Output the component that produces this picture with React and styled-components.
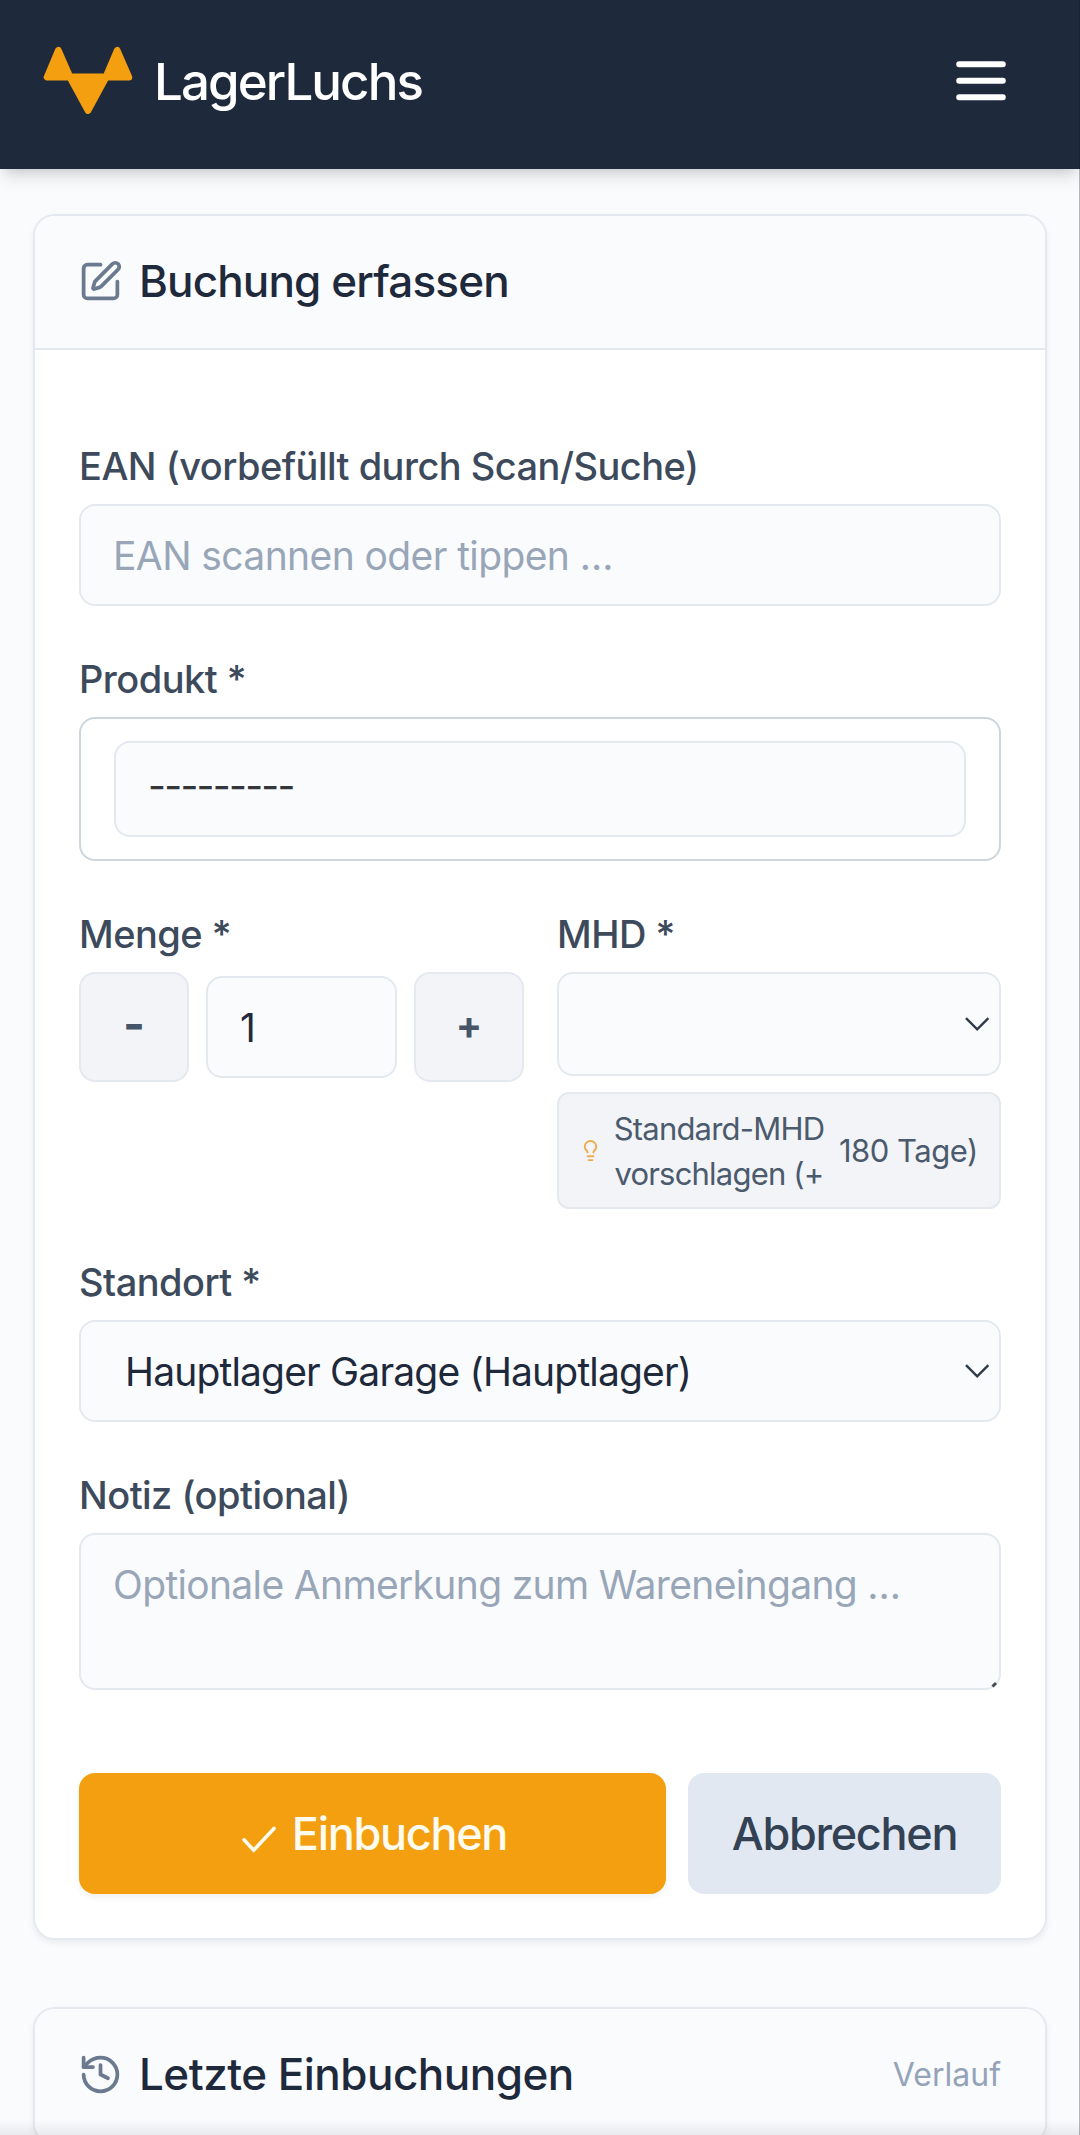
import styled, { createGlobalStyle } from 'styled-components'
import { History, Lightbulb, SquarePen } from 'lucide-react'

const GlobalStyle = createGlobalStyle`
  * {
    box-sizing: border-box;
  }

  body {
    margin: 0;
    background: #fafbfd;
    font-family: Inter, 'Liberation Sans', sans-serif;
    color: #1e293b;
  }

  input, textarea, button {
    font: inherit;
    margin: 0;
  }
`

const Page = styled.div`
  position: relative;
  height: 2135px;
  overflow: hidden;
`

const EdgeLine = styled.div`
  position: absolute;
  top: 0;
  right: 0;
  bottom: 0;
  width: 1px;
  background: rgba(20, 24, 32, 0.3);
`

const BottomFade = styled.div`
  position: absolute;
  left: 0;
  right: 0;
  bottom: 0;
  height: 15px;
  background: linear-gradient(rgba(30, 35, 50, 0), rgba(30, 35, 50, 0.08));
`

const Header = styled.header`
  display: flex;
  align-items: center;
  justify-content: space-between;
  height: 169px;
  padding: 0 74px 7px 43px;
  background: #1e2a3c;
  box-shadow: 0 11px 16px -3px rgba(0, 0, 0, 0.12), 0 6px 11px -6px rgba(0, 0, 0, 0.12);
`

const Brand = styled.div`
  display: flex;
  align-items: center;
  gap: 20px;
`

const BrandName = styled.span`
  font-size: 51px;
  font-weight: 500;
  line-height: 60px;
  letter-spacing: -1.9px;
  margin: 1px 0 0 1px;
  color: #fff;
`

const Main = styled.main`
  display: flex;
  flex-direction: column;
  gap: 67px;
  padding: 45px 33px 0;
`

const Card = styled.section`
  border: 2px solid #e4e9f0;
  border-radius: 22px;
  background: #fff;
  overflow: hidden;
  box-shadow: 0 3px 6px rgba(15, 23, 42, 0.07);
`

const CardHeader = styled.div`
  display: flex;
  align-items: center;
  height: 134px;
  padding: 0 44px 2px 43px;
  border-bottom: 2px solid #e4e9f0;
  background: #fafbfd;

  svg {
    flex: none;
    color: #6b7a8f;
  }
`

const CardTitle = styled.h2`
  flex: 1;
  margin: 0 0 0 16px;
  font-size: 44px;
  font-weight: 500;
  letter-spacing: ${({ $tracking }) => $tracking}px;
`

const CardNote = styled.span`
  font-size: 32px;
  color: #94a3b8;
`

const Form = styled.form`
  display: flex;
  flex-direction: column;
  gap: 49px;
  height: 1588px;
  padding: 92px 44px 0;
`

const Field = styled.div`
  display: flex;
  flex-direction: column;
  min-width: 0;
`

const Label = styled.label`
  margin: 0 0 14px;
  font-size: 38px;
  font-weight: 500;
  line-height: 48px;
  letter-spacing: -0.52px;
  color: #3c4a5c;
`

const Input = styled.input`
  width: 100%;
  height: 102px;
  padding: 0 32px;
  border: 2px solid #e4e9f0;
  border-radius: 16px;
  outline: none;
  background: #fafbfd;
  font-size: 39px;
  letter-spacing: -0.6px;
  color: #1e293b;

  &::placeholder {
    color: #98a6b8;
    opacity: 1;
  }
`

const NoteArea = styled.div`
  position: relative;
  height: 157px;

  textarea {
    display: block;
    height: 157px;
    padding: 26px 32px;
    line-height: 48px;
    letter-spacing: -0.66px;
    resize: none;
  }
`

const ResizeGrip = styled.svg`
  position: absolute;
  right: 3px;
  bottom: 2px;
`

const ProductBox = styled.div`
  height: 144px;
  padding: 22px 33px;
  border: 2px solid #cdd5dd;
  border-radius: 16px;
`

const ProductSelect = styled.div`
  display: flex;
  align-items: center;
  height: 96px;
  padding: 0 32px 8px;
  border: 2px solid #e4e9f0;
  border-radius: 16px;
  background: #fafbfd;
  font-size: 39px;
  letter-spacing: -1.75px;
  color: #33373c;
`

const Columns = styled.div`
  display: grid;
  grid-template-columns: 445px 1fr;
  gap: 33px;
`

const Stepper = styled.div`
  display: grid;
  grid-template-columns: 110px 1fr 110px;
  align-items: center;
  gap: 17px;
`

const StepButton = styled.button`
  display: flex;
  align-items: center;
  justify-content: center;
  height: 110px;
  padding: 0 0 ${({ $lift }) => $lift || 5}px;
  border: 2px solid #e4e9f0;
  border-radius: 16px;
  background: #f2f4f8;
  font-size: ${({ $size }) => $size || 39}px;
  font-weight: 700;
  color: #475569;
`

const Select = styled.div`
  display: flex;
  align-items: center;
  justify-content: space-between;
  height: ${({ $height }) => $height || 102}px;
  padding: 0 10px 0 44px;
  border: 2px solid #e4e9f0;
  border-radius: 16px;
  background: #fafbfd;
  font-size: 39px;
  letter-spacing: -0.83px;
`

const HintButton = styled.button`
  display: flex;
  align-items: center;
  height: 117px;
  margin-top: 16px;
  padding: 0 20px;
  border: 2px solid #e4e9f0;
  border-radius: 12px;
  background: #f2f4f8;
  font-size: 31px;
  line-height: 45px;
  color: #4b5a6c;

  svg {
    flex: none;
    color: #efab4c;
  }
`

const HintText = styled.span`
  width: 218px;
  margin-left: 8px;
  text-align: center;
  letter-spacing: -0.8px;
`

const HintDays = styled.span`
  margin-left: 11px;
  white-space: nowrap;
  letter-spacing: -0.5px;
`

const Actions = styled.div`
  display: grid;
  grid-template-columns: 587px 1fr;
  gap: 22px;
  margin-top: 34px;
`

const ActionButton = styled.button`
  display: flex;
  align-items: center;
  justify-content: center;
  gap: 16px;
  height: 121px;
  padding: 0 0 0 ${({ $primary }) => ($primary ? 4 : 0)}px;
  border: 0;
  border-radius: 16px;
  background: ${({ $primary }) => ($primary ? '#f39f10' : '#e1e8f1')};
  box-shadow: ${({ $primary }) => ($primary ? '0 3px 6px rgba(15, 23, 42, 0.06)' : 'none')};
  font-size: 45px;
  font-weight: 500;
  letter-spacing: -1.3px;
  color: ${({ $primary }) => ($primary ? '#fffbee' : '#334155')};

  svg {
    position: relative;
    top: 6px;
  }
`

const Logo = () => (
  <svg width="90" height="70" viewBox="0 0 90 70">
    <path
      d="M15.3 4.2 4 31.2h22.8L45 64.6l18.2-33.4H86L74.2 4.2 62.9 30.8H27Z"
      fill="#f39f10"
      stroke="#f39f10"
      strokeWidth="6.6"
      strokeLinejoin="round"
    />
  </svg>
)

const MenuIcon = () => (
  <svg width="50" height="40" viewBox="0 0 50 40" stroke="#fff" strokeWidth="6" strokeLinecap="round">
    <path d="M3.2 3.2h43.6M3.2 19.7h43.6M3.2 36.2h43.6" />
  </svg>
)

const Chevron = () => (
  <svg width="24" height="16" viewBox="0 0 24 16" fill="none" stroke="#2f3b4b" strokeWidth="2.4">
    <path d="M1 2.2 12.2 13.4 23.4 2.2" />
  </svg>
)

const Check = () => (
  <svg width="34" height="28" viewBox="0 0 34 28" fill="none" stroke="#fffbee" strokeWidth="3.6">
    <path d="M2 13.8 11.6 24.2 32 2.4" strokeLinecap="round" />
  </svg>
)

export default () => (
  <>
    <GlobalStyle />
    <Page>
      <Header>
        <Brand>
          <Logo />
          <BrandName>LagerLuchs</BrandName>
        </Brand>
        <MenuIcon />
      </Header>
      <Main>
        <Card>
          <CardHeader>
            <SquarePen size={45} />
            <CardTitle $tracking={-0.85}>Buchung erfassen</CardTitle>
          </CardHeader>
          <Form>
            <Field>
              <Label>EAN (vorbefüllt durch Scan/Suche)</Label>
              <Input placeholder="EAN scannen oder tippen …" />
            </Field>
            <Field>
              <Label>Produkt *</Label>
              <ProductBox>
                <ProductSelect>---------</ProductSelect>
              </ProductBox>
            </Field>
            <Columns>
              <Field>
                <Label>Menge *</Label>
                <Stepper>
                  <StepButton type="button" $size={47} $lift={8}>-</StepButton>
                  <Input defaultValue="1" />
                  <StepButton type="button">+</StepButton>
                </Stepper>
              </Field>
              <Field>
                <Label>MHD *</Label>
                <Select $height={104}>
                  <span />
                  <Chevron />
                </Select>
                <HintButton type="button">
                  <Lightbulb size={23} />
                  <HintText>Standard-MHD vorschlagen (+</HintText>
                  <HintDays>180 Tage)</HintDays>
                </HintButton>
              </Field>
            </Columns>
            <Field>
              <Label>Standort *</Label>
              <Select>
                <span>Hauptlager Garage (Hauptlager)</span>
                <Chevron />
              </Select>
            </Field>
            <Field>
              <Label>Notiz (optional)</Label>
              <NoteArea>
                <Input as="textarea" placeholder="Optionale Anmerkung zum Wareneingang …" />
                <ResizeGrip width="7" height="7" viewBox="0 0 7 7">
                  <path d="M1.5 5.5 5 2" stroke="#4a4d50" strokeWidth="3" />
                </ResizeGrip>
              </NoteArea>
            </Field>
            <Actions>
              <ActionButton type="button" $primary>
                <Check />
                Einbuchen
              </ActionButton>
              <ActionButton type="button">Abbrechen</ActionButton>
            </Actions>
          </Form>
        </Card>
        <Card>
          <CardHeader>
            <History size={45} />
            <CardTitle $tracking={-0.52}>Letzte Einbuchungen</CardTitle>
            <CardNote>Verlauf</CardNote>
          </CardHeader>
        </Card>
      </Main>
      <EdgeLine />
      <BottomFade />
    </Page>
  </>
)
